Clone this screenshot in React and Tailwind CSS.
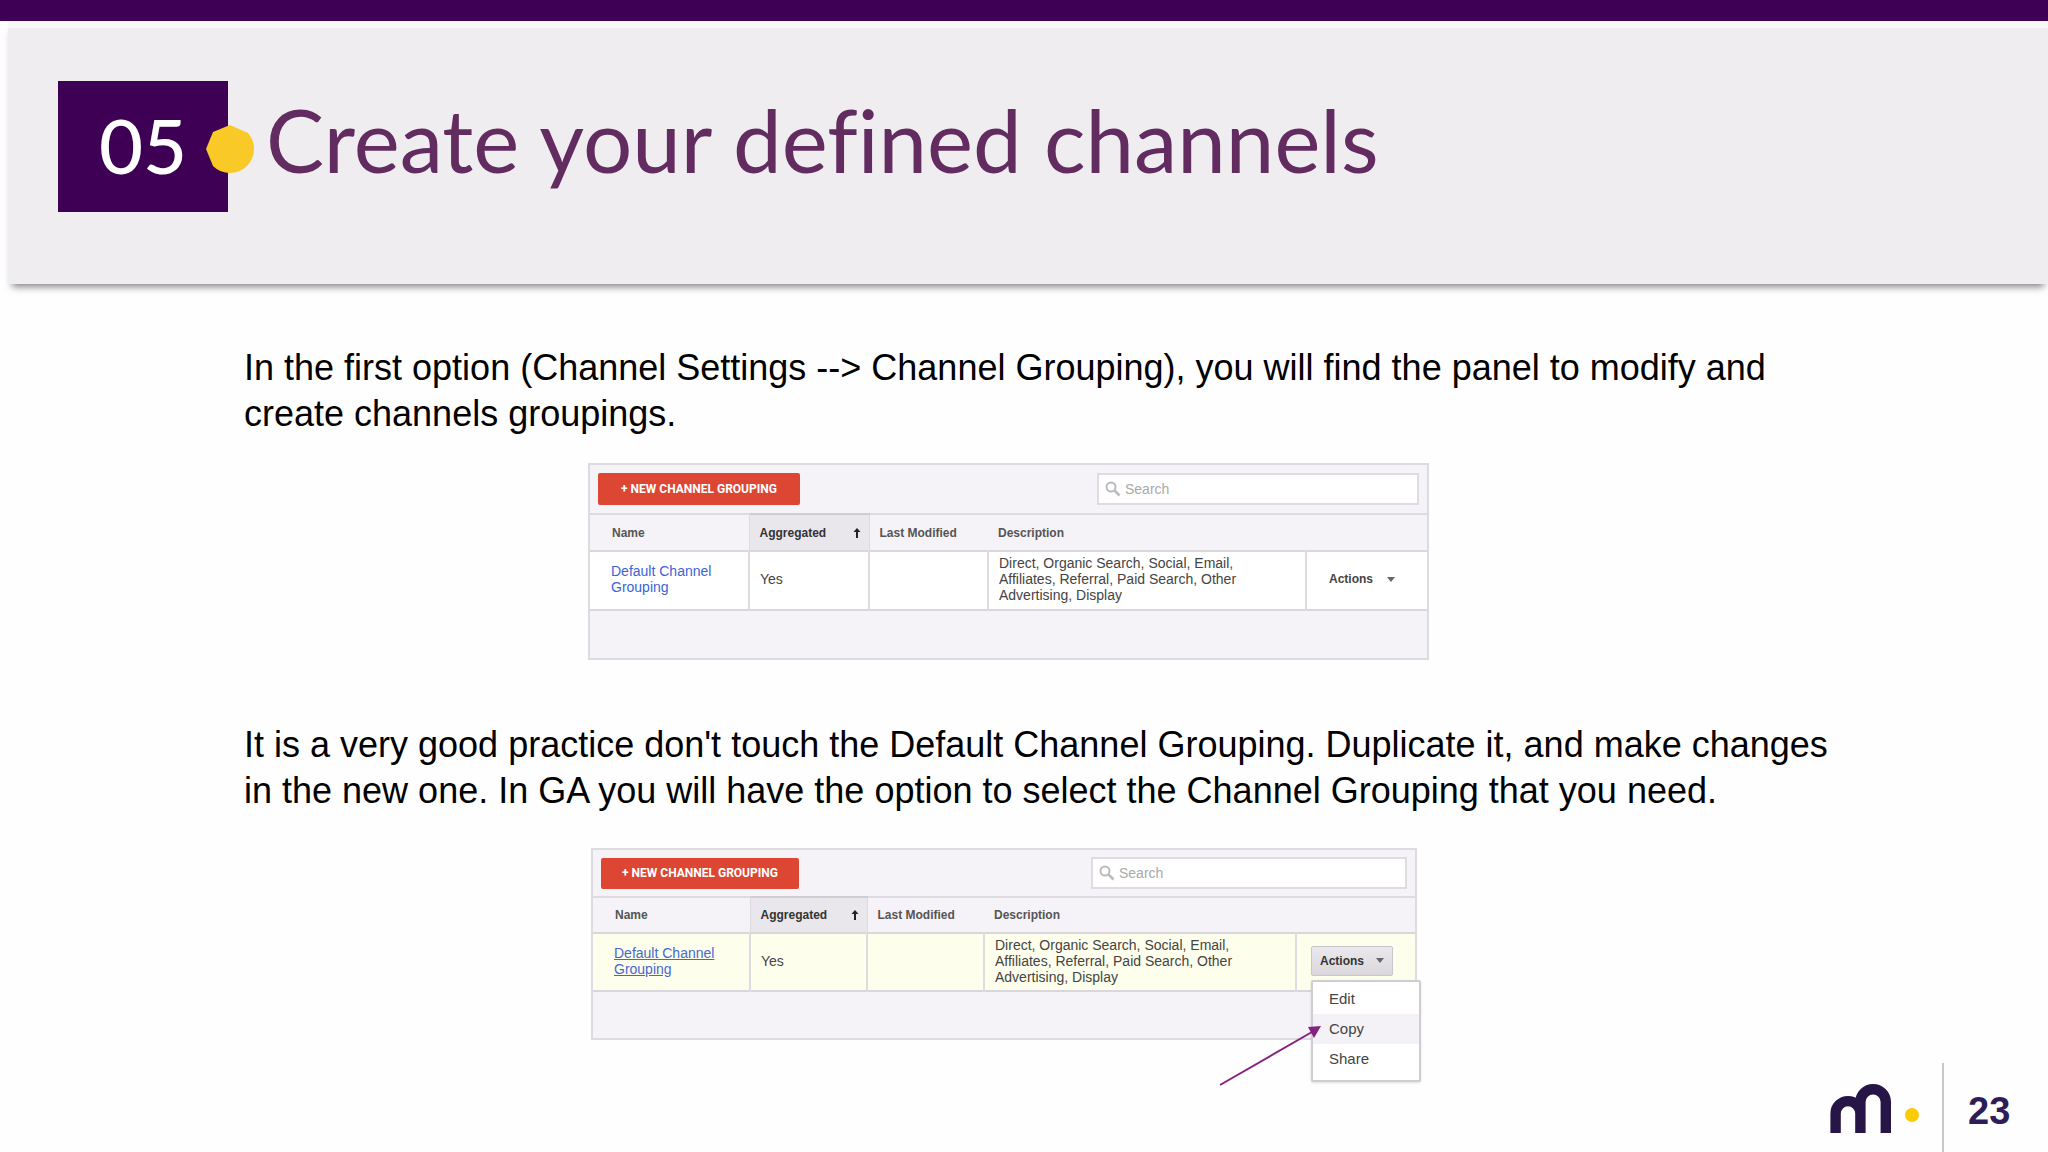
const columns = [
  { label: "Name", base: "w-[159px]", compact: "w-[157px]" },
  { label: "Aggregated", base: "w-[120px]", compact: "w-[117px]", sorted: true },
  { label: "Last Modified", base: "w-[119px]", compact: "w-[117px]" },
  { label: "Description", base: "w-[318px]", compact: "w-[312px]" },
  { label: "", base: "", compact: "" },
];

function SearchIcon() {
  return (
    <svg viewBox="0 0 16 16" className="size-4 shrink-0" fill="none" stroke="#bdbabf" strokeWidth="2" aria-hidden="true">
      <circle cx="6" cy="6" r="4.5" />
      <path d="M9.5 9.5 14.5 14.5" strokeWidth="2.6" />
    </svg>
  );
}

function SortArrow() {
  return (
    <svg viewBox="0 0 8 10" className="h-[10px] w-2" fill="#222" aria-hidden="true">
      <path d="M4 0 7.5 4H5v6H3V4H.5z" />
    </svg>
  );
}

function Caret() {
  return (
    <svg viewBox="0 0 8 5" className="h-[5px] w-2" fill="#666" aria-hidden="true">
      <path d="M0 0h8L4 5z" />
    </svg>
  );
}

function ActionsMenu() {
  return (
    <div role="menu" className="absolute left-[14px] top-[46px] z-10 w-[110px] rounded-xs border-2 border-[#cfcdd1] bg-white pt-[2px] pb-[6px] shadow-sm">
      {["Edit", "Copy", "Share"].map((item) => (
        <button
          key={item}
          role="menuitem"
          className={
            item === "Copy"
              ? "block h-[30px] w-full bg-[#f4f2f6] pl-4 text-left text-[15px]"
              : "block h-[30px] w-full pl-4 text-left text-[15px]"
          }
        >
          {item}
        </button>
      ))}
      <svg
        viewBox="0 0 104 62"
        className="absolute -left-[94px] top-[43px] h-[62px] w-[104px]"
        aria-hidden="true"
      >
        <path d="M1 60 93 7" stroke="#85217f" strokeWidth="2" fill="none" />
        <path d="M102 1 89 2 95 13z" fill="#85217f" />
      </svg>
    </div>
  );
}

function GroupingPanel({ id, active }) {
  const row = active ? "bg-[#fefeec]" : "bg-white";
  return (
    <div
      className={
        active
          ? "ml-[347px] w-[826px] border-2 border-[#dddbdf] bg-[#f5f3f7] text-[#444]"
          : "ml-[344px] w-[841px] border-2 border-[#dddbdf] bg-[#f5f3f7] text-[#444]"
      }
    >
      <div className={active ? "flex h-[46px] items-center justify-between px-2" : "flex h-12 items-center justify-between px-2"}>
        <button
          className={
            active
              ? "h-[31px] w-[198px] rounded-xs bg-[#dc4633] font-[Roboto] text-[12px] font-bold text-white"
              : "h-8 w-[202px] rounded-xs bg-[#dc4633] font-[Roboto] text-[12px] font-bold text-white"
          }
        >
          + NEW CHANNEL GROUPING
        </button>
        <label
          htmlFor={id}
          className={
            active
              ? "flex h-8 w-[316px] items-center gap-1 border-2 border-[#dedce0] bg-white px-[6px]"
              : "flex h-8 w-[322px] items-center gap-1 border-2 border-[#dedce0] bg-white px-[6px]"
          }
        >
          <SearchIcon />
          <input
            id={id}
            type="search"
            aria-label="Search"
            placeholder="Search"
            className="w-full min-w-0 bg-transparent text-[14px] outline-none placeholder:text-[#aaa8ac]"
          />
        </label>
      </div>
      <table className="w-full table-fixed border-collapse text-left">
        <thead>
          <tr className={active ? "h-9" : "h-[37px]"}>
            {columns.map((c) => (
              <th
                key={c.label}
                scope="col"
                className={`${active ? c.compact : c.base} ${
                  c.sorted
                    ? "border-x border-[#dddbdf] border-t-2 border-t-[#cfcdd1] bg-[#e9e7eb] pl-[10px] text-[#333]"
                    : "border-t-2 border-[#dddbdf] first:pl-[22px] pl-[10px] text-[#555]"
                } pr-2 text-[12px] font-bold`}
              >
                <span className="flex items-center justify-between whitespace-nowrap">
                  {c.label}
                  {c.sorted && <SortArrow />}
                </span>
              </th>
            ))}
          </tr>
        </thead>
        <tbody>
          <tr className={`${row} border-y-2 border-[#d9d7db] text-[14px] leading-4 ${active ? "h-[58px]" : "h-[59px]"}`}>
            <td className="pl-[21px] pb-[3px]">
              <a href="#grouping" className={active ? "text-[#4468cf] underline" : "text-[#3a63d8]"}>
                Default Channel
                <br />
                Grouping
              </a>
            </td>
            <td className="border-x-2 border-[#dddbdf] pl-[10px] pb-[3px]">Yes</td>
            <td className="border-x-2 border-[#dddbdf]"></td>
            <td className="whitespace-nowrap border-x-2 border-[#dddbdf] pl-[10px] pb-[3px]">
              Direct, Organic Search, Social, Email,
              <br />
              Affiliates, Referral, Paid Search, Other
              <br />
              Advertising, Display
            </td>
            <td className="relative pl-[14px] pb-[3px]">
              <button
                aria-haspopup="menu"
                aria-expanded={active}
                className={
                  active
                    ? "flex h-[30px] w-[82px] items-center justify-between rounded-xs border border-[#c9c7cb] bg-linear-to-b from-[#ebe9ed] to-[#d9d7db] px-2 text-[12px] font-bold text-[#333]"
                    : "flex h-[30px] w-[82px] items-center justify-between px-2 text-[12px] font-bold"
                }
              >
                Actions
                <Caret />
              </button>
              {active && <ActionsMenu />}
            </td>
          </tr>
        </tbody>
      </table>
      <div className={active ? "h-[46px]" : "h-[47px]"} />
    </div>
  );
}

export default function App() {
  return (
    <div className="flex min-h-screen flex-col overflow-hidden bg-[#fefefe] font-['Liberation_Sans',Arial,sans-serif]">
      <div className="z-10 h-[21px] bg-[#3d0054]" />
      <header className="ml-2 flex h-[263px] items-start border-t-[7px] border-[#f8f7f9] bg-[#efedf0] pl-[50px] pt-[53px] shadow-[0_7px_7px_-4px_rgba(60,55,65,0.6)]">
        <div className="relative flex h-[131px] w-[170px] items-center justify-center bg-[#3d0054] pb-1">
          <span className="font-[Lato,sans-serif] text-[76px] font-medium leading-none text-white">05</span>
          <svg viewBox="0 0 48 48" className="absolute -right-[26px] top-11 size-12" fill="#f8c927" aria-hidden="true">
            <path d="M24 0 42 8Q48 15 48 24A24 24 0 0 1 24 48Q14 48 7 41L0 24 7 7z" />
          </svg>
        </div>
        <h1 className="ml-[38px] whitespace-nowrap font-[Lato,sans-serif] text-[87px] leading-[118px] text-[#632c60] [font-variant-ligatures:none]">
          Create your defined channels
        </h1>
      </header>

      <main className="flex-1 pl-[244px] text-black">
        <p className="pt-[61px] text-[36px] leading-[46px]">
          In the first option (Channel Settings --&gt; Channel Grouping), you will find the panel to modify and
          <br />
          create channels groupings.
        </p>
        <div className="pt-[26px]">
          <GroupingPanel id="search-first" active={false} />
        </div>
        <p className="pt-[62px] text-[36px] leading-[46px]">
          It is a very good practice don't touch the Default Channel Grouping. Duplicate it, and make changes
          <br />
          in the new one. In GA you will have the option to select the Channel Grouping that you need.
        </p>
        <div className="pt-[34px]">
          <GroupingPanel id="search-second" active={true} />
        </div>
      </main>

      <footer className="-mt-4 flex h-[89px] items-end justify-end">
        <svg viewBox="0 0 90 52" className="mr-[22px] mb-[17px] h-[52px] w-[90px]" fill="none" aria-hidden="true">
          <path
            d="M5.6 50V30.500a12.400 12.400 0 0 1 24.800 0M30.400 50V19a12.700 12.700 0 0 1 25.400 0V50M30.400 50V22"
            stroke="#271547"
            strokeWidth="10.4"
            strokeLinejoin="round"
          />
          <circle cx="82" cy="32" r="7" fill="#fbcb05" />
        </svg>
        <div className="flex h-full w-[106px] items-center border-l-2 border-[#c9c9c9] pl-6 text-[38px] font-bold text-[#2f1d57]">
          <span className="mt-2">23</span>
        </div>
      </footer>
    </div>
  );
}
